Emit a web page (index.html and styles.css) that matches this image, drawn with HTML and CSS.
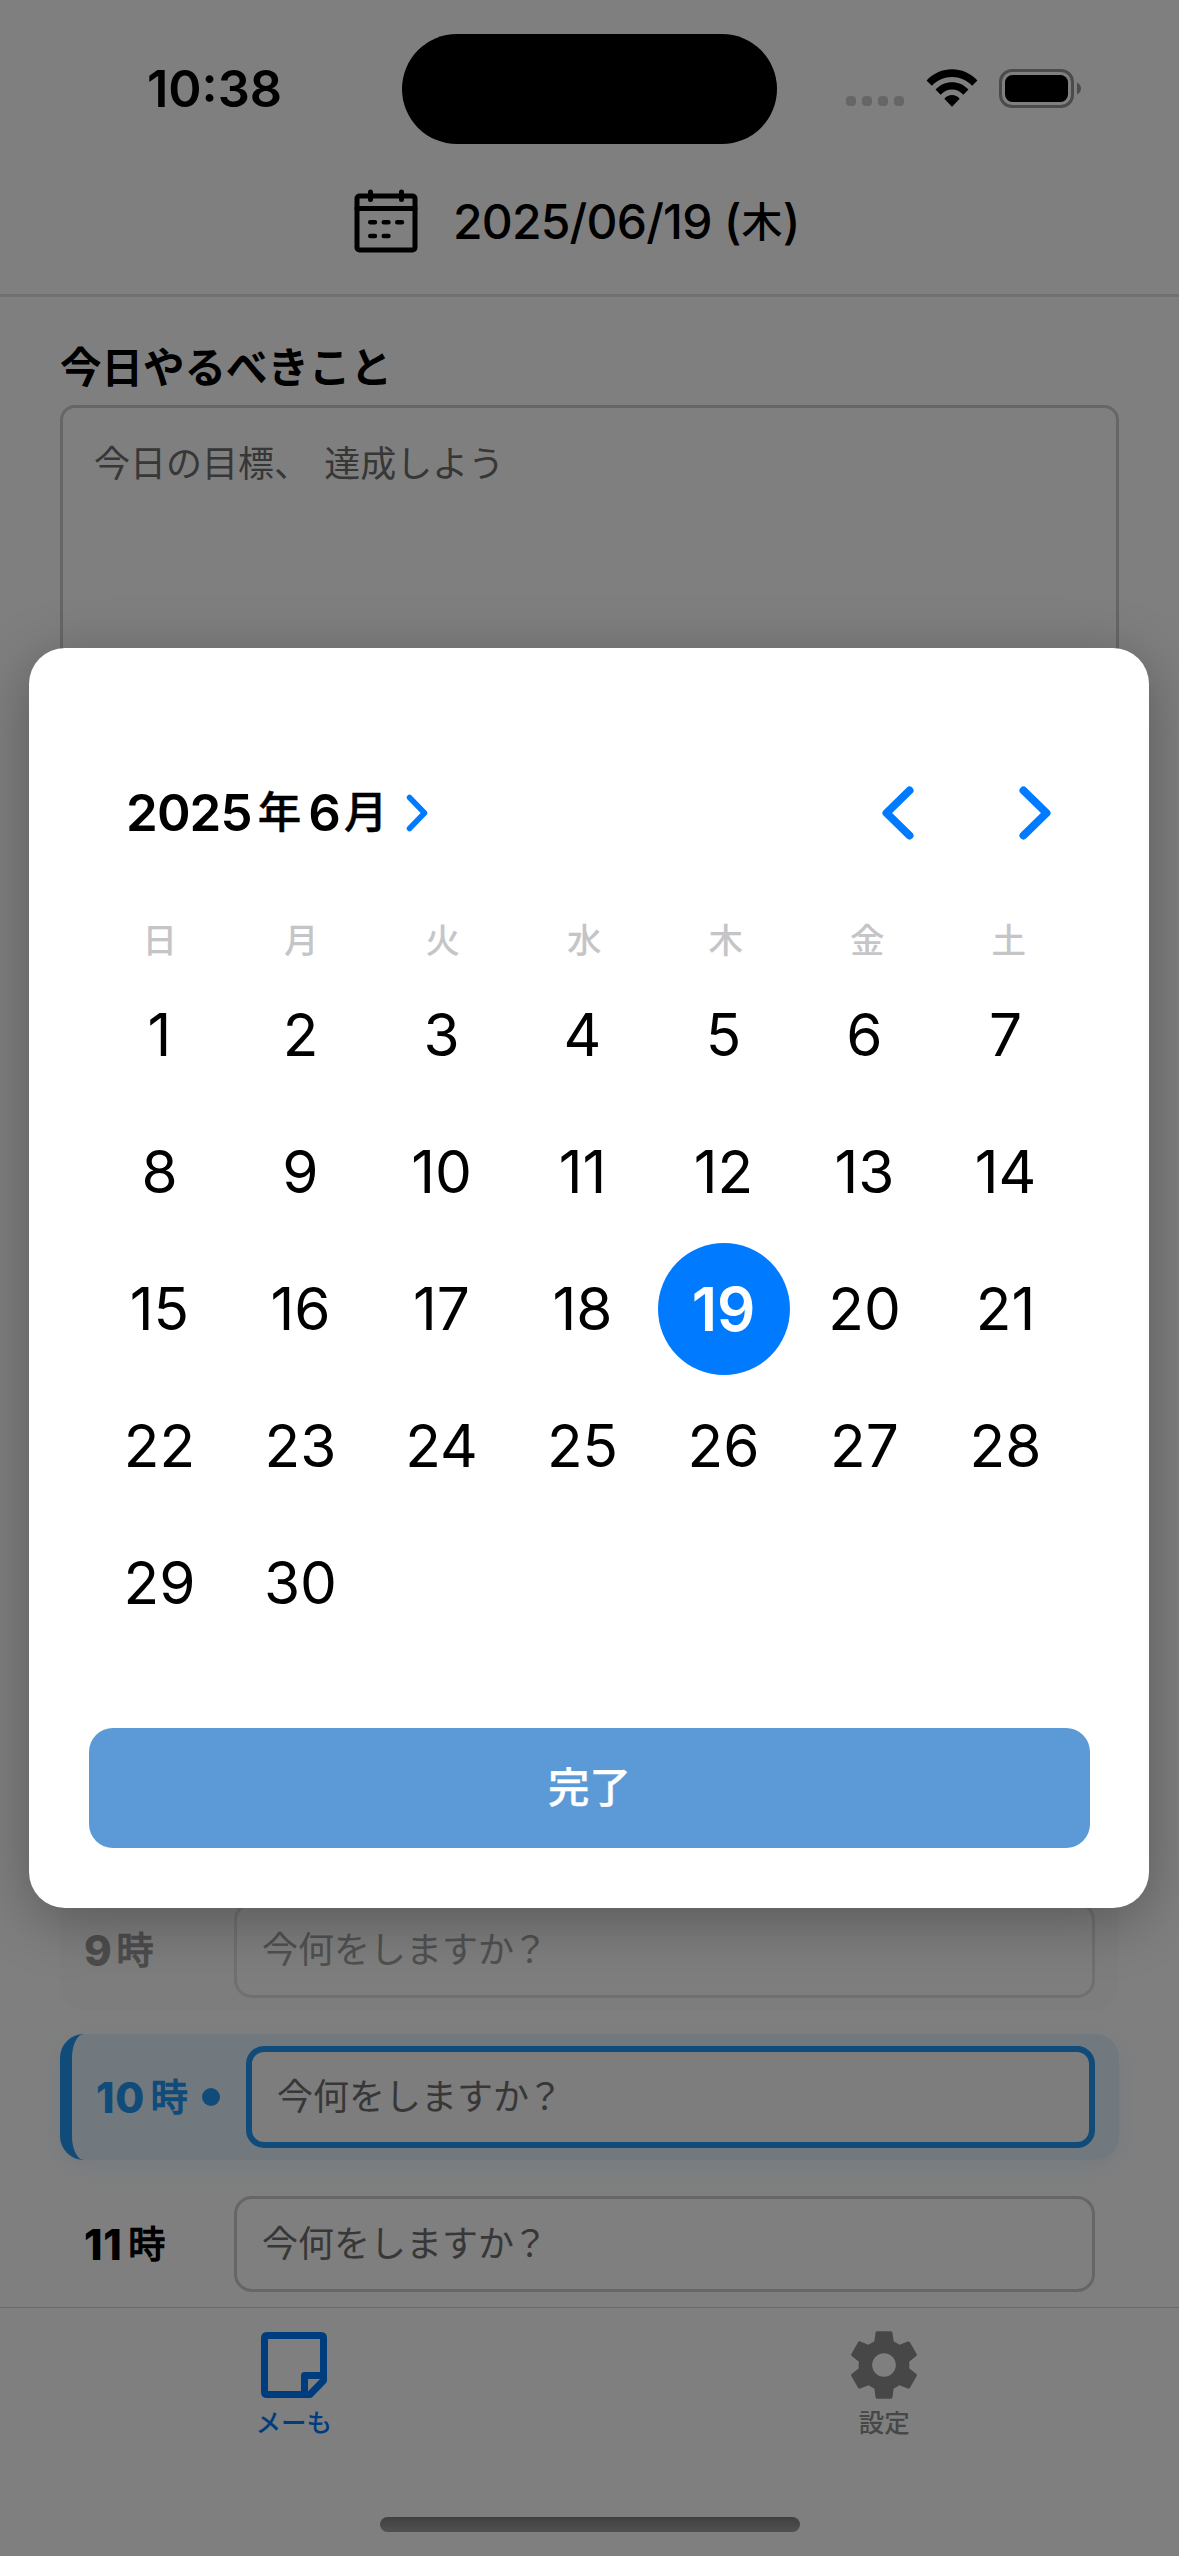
FILE: index.html
```html
<!DOCTYPE html>
<html lang="ja">
<head>
<meta charset="utf-8">
<title>メーも</title>
<link rel="stylesheet" href="styles.css">
</head>
<body>
<div class="screen">
  <div class="status">
    <span class="time">10:38</span>
    <span class="island"></span>
    <span class="indicators">
      <span class="cell"><i></i><i></i><i></i><i></i></span>
      <svg class="wifi" width="52" height="38" viewBox="0 0 52 38">
        <path d="M.6 11.6C14.500-3.400 37.500-3.400 51.400 11.600L46.200 16.800C35.300 5.200 16.700 5.200 5.800 16.800Z"/>
        <path d="M9.500 20.500C18.500 10.700 33.500 10.700 42.500 20.500L37.300 25.700C31.200 18.600 20.800 18.600 14.700 25.700Z"/>
        <path d="M18.300 29.700C22.500 24.900 29.500 24.900 33.700 29.700L26 37.700Z"/>
      </svg>
      <svg class="battery" width="83" height="39" viewBox="0 0 83 39">
        <rect x="1.500" y="1.500" width="72" height="36" rx="11.500" fill="none" stroke="#979797" stroke-width="3"/>
        <rect x="6" y="6" width="63" height="27" rx="7.500"/>
        <path d="M78 13.500c5.300 2.500 5.300 9.500 0 12z" fill="#979797"/>
      </svg>
    </span>
  </div>

  <header class="header">
    <svg width="64" height="66" viewBox="0 0 64 66" fill="none" stroke="#000" stroke-width="5" stroke-linecap="round">
      <rect x="3" y="8" width="58" height="54" rx="2.500"/>
      <path d="M3 20.500H61M16.500 4V11.500M47.500 4V11.500"/>
      <path stroke-width="4.600" d="M16.300 34.200h4.600M29.800 34.200h4.600M43.300 34.200h4.600M16.300 48h4.600M29.800 48h4.600"/>
    </svg>
    <span class="date">2025/06/19 (<span class="kanji">木</span>)</span>
  </header>

  <main class="content">
    <section class="goal">
      <h2>今日やるべきこと</h2>
      <div class="goal-box">今日の目標、 達成しよう</div>
    </section>
    <section class="hours">
      <div class="hour past"><span class="label">9<b>時</b></span><div class="field">今何をしますか<span class="mark">？</span></div></div>
      <div class="hour now"><span class="label">10<b>時</b><i class="dot"></i></span><div class="field">今何をしますか<span class="mark">？</span></div></div>
      <div class="hour"><span class="label">11<b>時</b></span><div class="field">今何をしますか<span class="mark">？</span></div></div>
    </section>
  </main>

  <nav class="tabs">
    <div class="tab active">
      <svg width="66" height="66" viewBox="0 0 66 66" fill="none" stroke="currentColor" stroke-width="7" stroke-linejoin="round">
        <path d="M6 3.500H60Q62.500 3.500 62.500 6V48.500L49 62.500H6Q3.500 62.500 3.500 60V6Q3.500 3.500 6 3.500Z"/>
        <path d="M43.500 62V43.500H62"/>
      </svg>
      <span>メーも</span>
    </div>
    <div class="tab">
      <svg width="66" height="68" viewBox="2.250 1.950 19.500 20.100" fill="currentColor">
        <path d="M19.430 12.980c.04-.32.07-.64.07-.98s-.03-.66-.07-.98l2.110-1.650c.19-.15.24-.42.12-.64l-2-3.460c-.12-.22-.39-.3-.61-.22l-2.490 1c-.52-.4-1.080-.73-1.690-.98l-.38-2.650C14.460 2.180 14.250 2 14 2h-4c-.25 0-.46.18-.49.42l-.38 2.650c-.61.25-1.170.59-1.690.98l-2.490-1c-.23-.09-.49 0-.61.22l-2 3.460c-.13.22-.07.49.12.64l2.110 1.650c-.04.32-.07.65-.07.98s.03.66.07.98l-2.110 1.650c-.19.15-.24.42-.12.64l2 3.460c.12.22.39.3.61.22l2.490-1c.52.4 1.080.73 1.690.98l.38 2.650c.03.24.24.42.49.42h4c.25 0 .46-.18.49-.42l.38-2.650c.61-.25 1.170-.59 1.690-.98l2.490 1c.23.09.49 0 .61-.22l2-3.460c.12-.22.07-.49-.12-.64l-2.110-1.650zM12 15.500c-1.930 0-3.500-1.570-3.500-3.500s1.570-3.500 3.500-3.500 3.500 1.570 3.500 3.500-1.570 3.500-3.500 3.500z"/>
      </svg>
      <span>設定</span>
    </div>
  </nav>
  <div class="home"></div>

  <div class="overlay">
    <div class="modal">
      <div class="month">
        <span class="title">2025<b>年</b>6<b>月</b></span>
        <svg class="more" width="22" height="38" viewBox="0 0 22 38"><path d="M3.500 3.500L18.500 19L3.500 34.500" stroke-width="5.500"/></svg>
        <svg class="prev" width="32" height="54" viewBox="0 0 32 54"><path d="M27.500 4.500L4.500 27L27.500 49.500" stroke-width="8"/></svg>
        <svg width="32" height="54" viewBox="0 0 32 54"><path d="M4.500 4.500L27.500 27L4.500 49.500" stroke-width="8"/></svg>
      </div>
      <div class="week"><span>日</span><span>月</span><span>火</span><span>水</span><span>木</span><span>金</span><span>土</span></div>
      <div class="days">
        <span>1</span><span>2</span><span>3</span><span>4</span><span>5</span><span>6</span><span>7</span>
        <span>8</span><span>9</span><span>10</span><span>11</span><span>12</span><span>13</span><span>14</span>
        <span>15</span><span>16</span><span>17</span><span>18</span><span class="selected">19</span><span>20</span><span>21</span>
        <span>22</span><span>23</span><span>24</span><span>25</span><span>26</span><span>27</span><span>28</span>
        <span>29</span><span>30</span>
      </div>
      <div class="done">完了</div>
    </div>
  </div>
</div>
</body>
</html>
```

FILE: styles.css
```css
* { box-sizing: border-box; }
body {
  margin: 0;
  font-family: Inter, "Noto Sans CJK JP", sans-serif;
  color: #000;
  background: #fff;
}
svg { display: block; flex: none; }
.screen {
  position: relative;
  display: flex;
  flex-direction: column;
  width: 1179px;
  height: 2556px;
  overflow: hidden;
}

/* status bar */
.status {
  display: grid;
  grid-template-columns: 402px 375px 402px;
  height: 177px;
  padding-top: 33.500px;
}
.time {
  padding-left: 27px;
  text-align: center;
  font-size: 50.500px;
  font-weight: 600;
  line-height: 109px;
}
.island { height: 110.500px; border-radius: 56px; background: #000; }
.indicators { display: flex; align-items: center; height: 109px; padding-left: 69px; }
.cell { display: flex; gap: 6px; padding-top: 25px; margin-right: 22px; }
.cell i { width: 10px; height: 10px; border-radius: 4px; background: #cdcdcd; }
.wifi { margin-right: 21px; }

/* date header */
.header {
  display: flex;
  align-items: flex-start;
  gap: 35px;
  height: 120px;
  padding: 11px 0 0 354px;
  border-bottom: 3px solid #e0e0e0;
}
.date { font-size: 48px; font-weight: 500; line-height: 67px; letter-spacing: -.8px; }
.kanji { margin: 0 1px; font-size: 41px; line-height: 1; vertical-align: 2px; }

/* page body */
.content {
  display: flex;
  flex-direction: column;
  height: 2010px;
  padding: 33px 60px 3px;
}
.goal h2 {
  margin: 0;
  height: 75px;
  padding-top: 2px;
  font-size: 41.500px;
  line-height: 72px;
  font-weight: 700;
}
.goal-box {
  height: 300px;
  padding: 26px 31px;
  border: 3px solid #ccc;
  border-radius: 15px;
  font-size: 36px;
  line-height: 60px;
  word-spacing: 4px;
  color: #6e6e6e;
}
.hours { display: flex; flex-direction: column; gap: 24px; margin-top: auto; }
.hour {
  display: flex;
  align-items: center;
  height: 120px;
  padding: 0 24px;
  border-radius: 24px;
}
.label {
  display: flex;
  align-items: center;
  width: 150px;
  font-size: 42px;
  font-weight: 800;
  letter-spacing: .6px;
}
.label b {
  margin: 0 0 4px 6px;
  font-size: 37px;
  font-weight: 400;
  letter-spacing: 0;
  -webkit-text-stroke: 1.400px currentColor;
}
.past .label b { margin-left: 4px; }
.field {
  flex: 1;
  height: 96px;
  padding: 0 25px;
  border: 3px solid #ccc;
  border-radius: 18px;
  font-size: 36px;
  line-height: 90px;
  color: #6e6e6e;
}
.mark { margin-left: -2px; }
.past { background: #fafafa; }
.past .label { color: #999; }
.past .field { border-color: #e0e0e0; background: #fcfcfc; color: #a0a0a0; }
.now {
  height: 126px;
  border-left: 12px solid #2196f3;
  background: #e3f2fd;
  box-shadow: 0 6px 24px rgba(33, 150, 243, .1);
}
.now .label { color: #2196f3; }
.now .field { height: 102px; border: 6px solid #2196f3; background: #fafafa; }
.dot { width: 18px; height: 18px; margin-left: 14px; border-radius: 50%; background: #2196f3; }

/* tab bar */
.tabs {
  display: grid;
  grid-template-columns: 1fr 1fr;
  height: 210px;
  border-top: 1px solid #d4d4d4;
}
.tab {
  display: flex;
  flex-direction: column;
  align-items: center;
  padding-top: 23px;
  font-size: 25.500px;
  line-height: 47px;
  font-weight: 500;
  color: #8e8e8e;
}
.tab svg { height: 68px; }
.active { padding-right: 2px; color: #007aff; }
.home {
  width: 420px;
  height: 15px;
  margin: 0 auto;
  border-radius: 8px;
  background: linear-gradient(#808080, #a2a2a2);
}

/* date picker */
.overlay {
  position: absolute;
  inset: 0;
  padding: 648px 30px 0 29px;
  background: rgba(0, 0, 0, .5);
}
.modal {
  height: 1260px;
  padding: 132px 59px 60px 60px;
  border-radius: 36px;
  background: #fff;
  box-shadow: 0 12px 60px rgba(0, 0, 0, .3);
}
.month { display: flex; align-items: center; height: 65px; padding: 0 39px 0 37px; }
.month path { fill: none; stroke: #007aff; stroke-linecap: round; stroke-linejoin: round; }
.title {
  display: flex;
  align-items: center;
  width: 258px;
  font-size: 51px;
  font-weight: 600;
  line-height: 65px;
  letter-spacing: -.9px;
}
.title b {
  margin: 0 7px 1px 6px;
  font-size: 43.500px;
  font-weight: 500;
  letter-spacing: 0;
  -webkit-text-stroke: .5px currentColor;
}
.title b:last-child { margin: 0 0 1px 4px; }
.more { margin-left: 22px; }
.prev { margin: 0 105px 0 auto; }
.week, .days { display: grid; grid-template-columns: repeat(7, 141px); text-align: center; }
.week {
  grid-template-columns: repeat(7, 141.500px);
  height: 121px;
  padding-top: 66px;
  font-size: 34.500px;
  line-height: 60px;
  font-weight: 500;
  color: #c5c5c7;
}
.days { grid-auto-rows: 137px; line-height: 137px; font-size: 58.500px; height: 762px; }
.selected {
  align-self: center;
  justify-self: center;
  width: 132px;
  height: 132px;
  line-height: 132px;
  border-radius: 50%;
  background: #007aff;
  color: #fff;
  font-size: 60px;
  font-weight: 600;
}
.done {
  height: 120px;
  border-radius: 24px;
  background: #5b9ad6;
  color: #fff;
  font-size: 41.500px;
  font-weight: 500;
  line-height: 121px;
  text-align: center;
  -webkit-text-stroke: .3px currentColor;
}
```
